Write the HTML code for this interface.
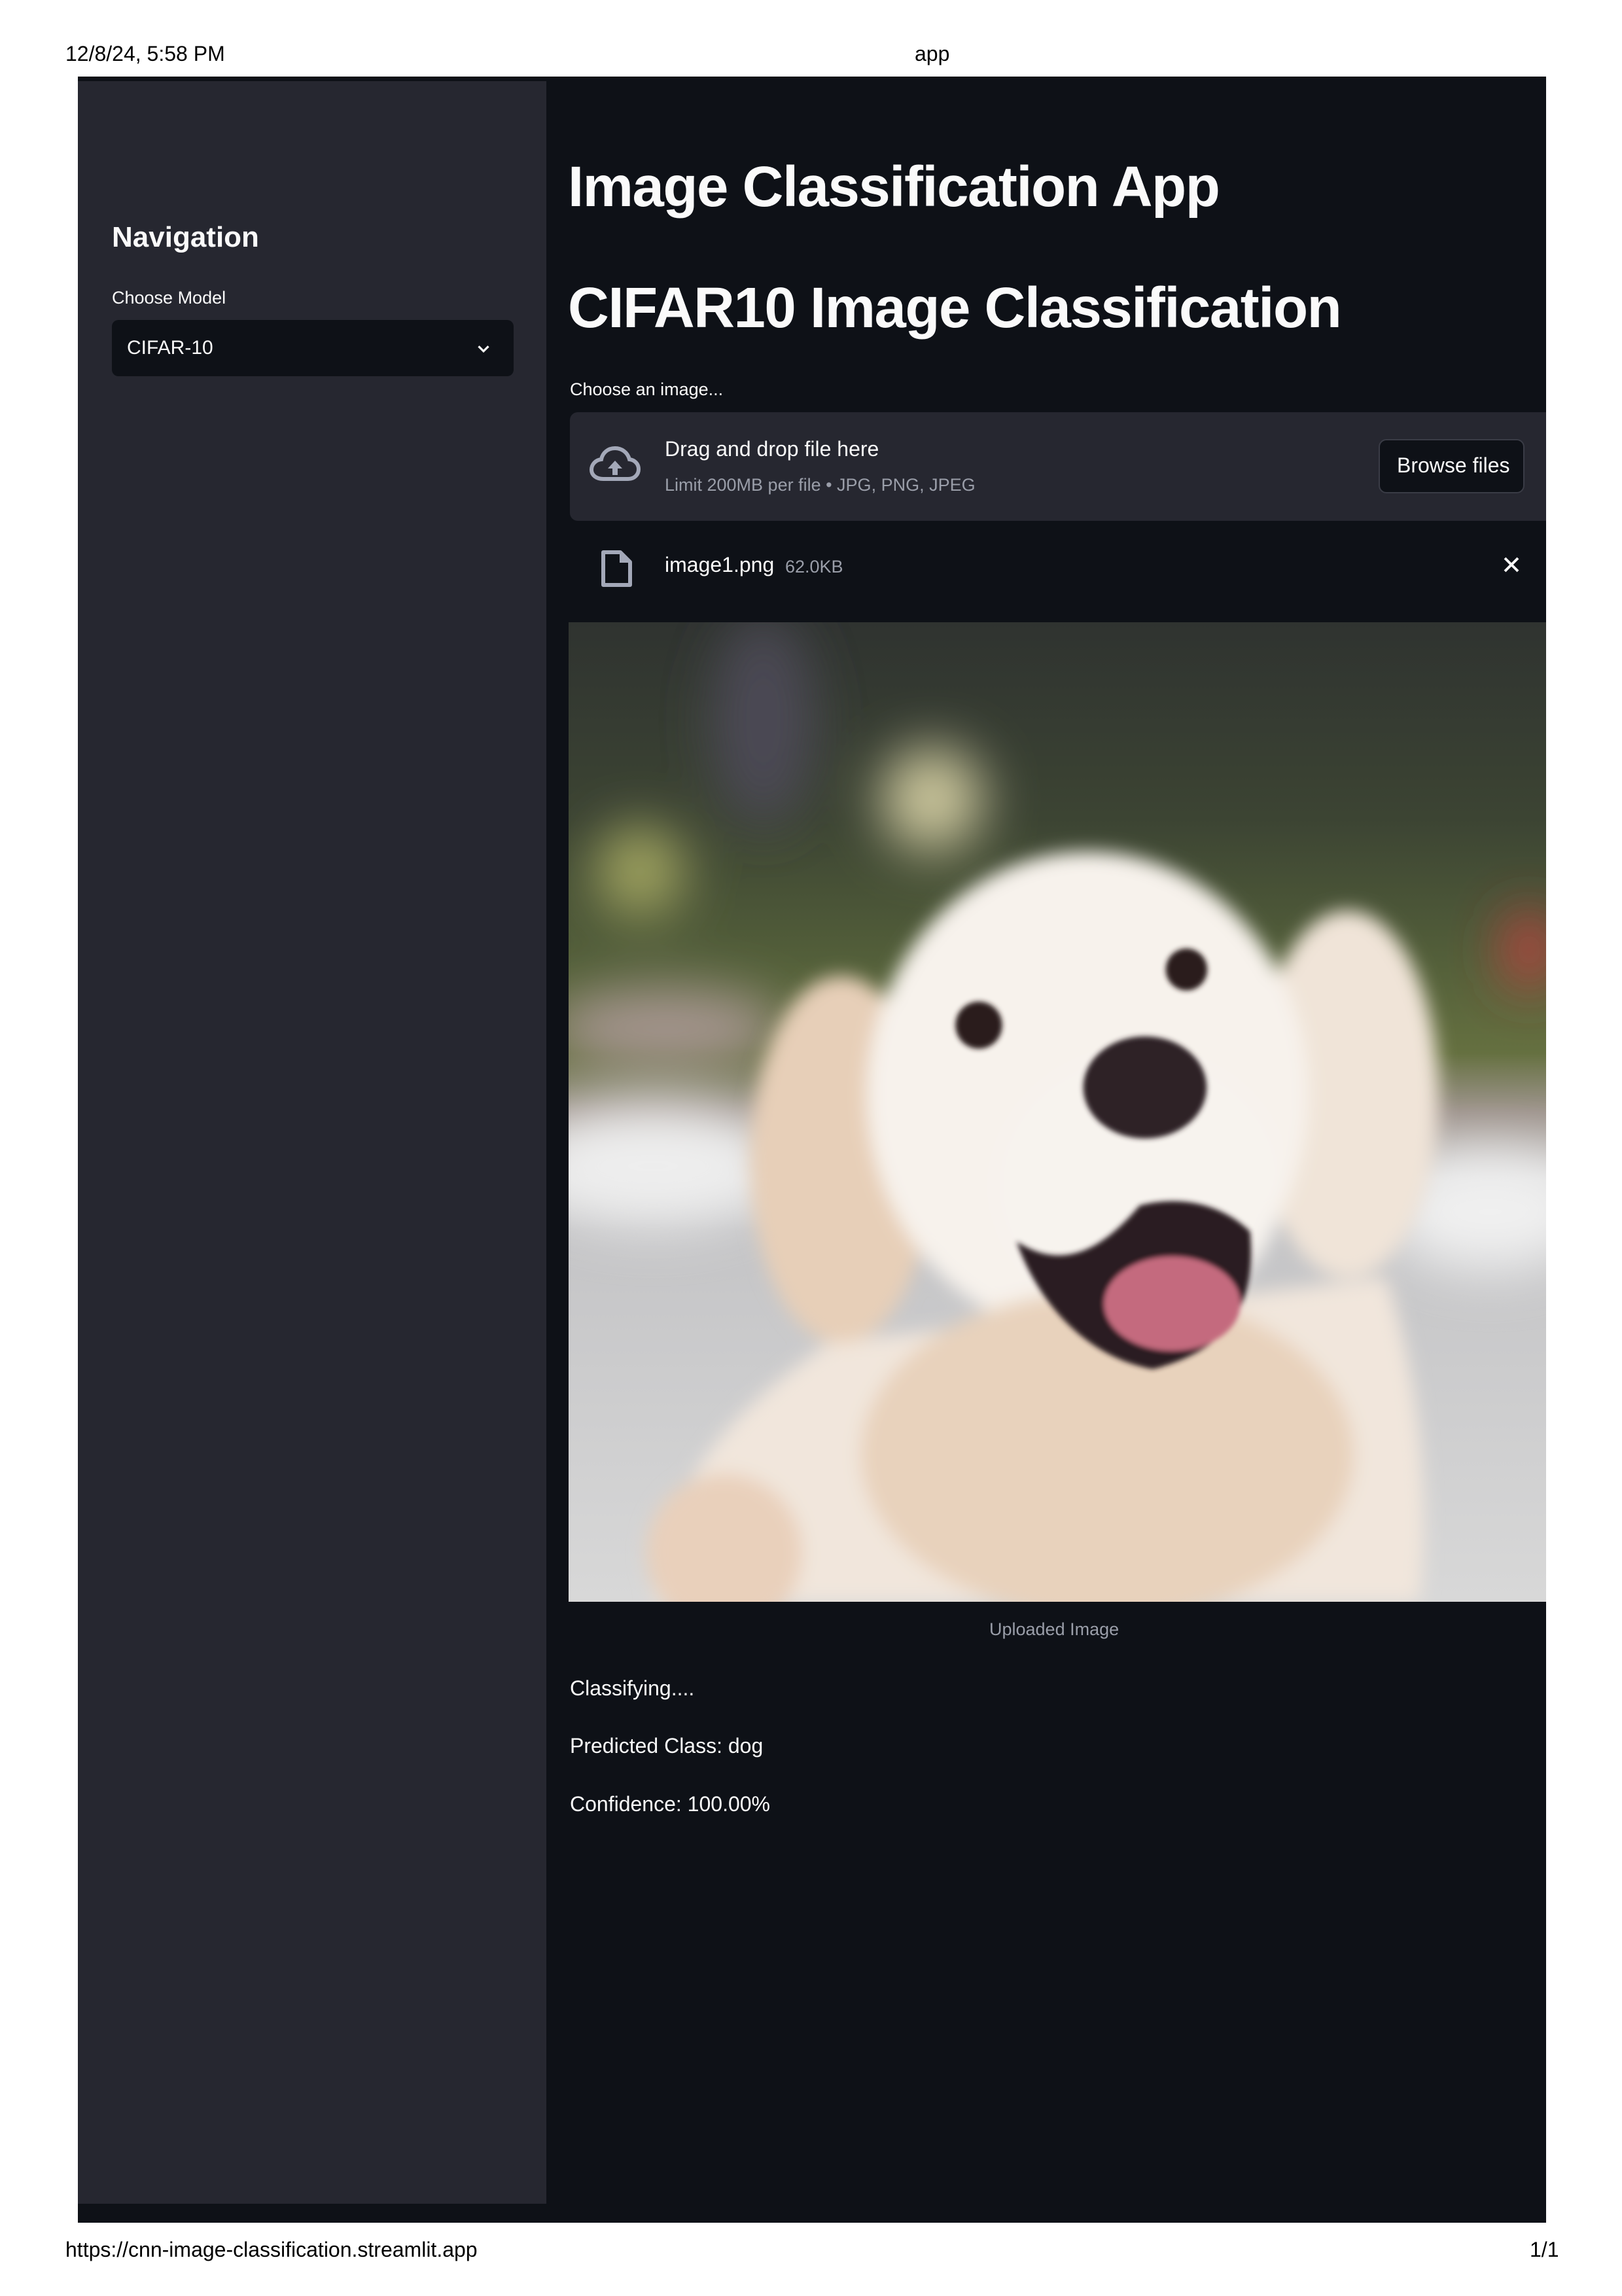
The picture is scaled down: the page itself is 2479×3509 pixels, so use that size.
<!DOCTYPE html>
<html><head><meta charset="utf-8"><style>
*{margin:0;padding:0;box-sizing:border-box}
body{width:2479px;height:3509px;background:#fff;position:relative;overflow:hidden;font-family:"Liberation Sans",sans-serif}
.a{position:absolute;white-space:nowrap}
.ph{font-family:"Liberation Sans",sans-serif;color:#000;font-size:32px}
.t{color:#fafafa}
</style></head><body>
<div class="a ph" style="left:100px;top:64px">12/8/24, 5:58 PM</div>
<div class="a ph" style="left:1398px;top:64px">app</div>
<div class="a" style="left:119px;top:117px;width:2244px;height:3280px;background:#0e1117"></div>
<div class="a" style="left:119px;top:124px;width:716px;height:3244px;background:#262730"></div>
<div class="a t" style="left:171px;top:338px;font-size:44px;font-weight:600">Navigation</div>
<div class="a t" style="left:171px;top:440px;font-size:27px">Choose Model</div>
<div class="a" style="left:171px;top:489px;width:614px;height:86px;background:#0e1117;border-radius:10px"></div>
<div class="a t" style="left:194px;top:515px;font-size:30px">CIFAR-10</div>
<svg class="a" style="left:724px;top:518px" width="30" height="30" viewBox="0 0 24 24"><path d="M6 9l6 6 6-6" fill="none" stroke="#fafafa" stroke-width="2.6"/></svg>

<div class="a t" style="left:868px;top:236px;font-size:87px;font-weight:700;letter-spacing:-1.5px">Image Classification App</div>
<div class="a t" style="left:868px;top:421px;font-size:87px;font-weight:700;letter-spacing:-1.5px">CIFAR10 Image Classification</div>
<div class="a t" style="left:871px;top:580px;font-size:27px">Choose an image...</div>

<div class="a" style="left:871px;top:630px;width:1492px;height:166px;background:#262730;border-radius:12px 0 0 12px"></div>
<svg class="a" style="left:900px;top:680px" width="80" height="60" viewBox="0 0 80 60"><path d="M22 52 H60 C70 52 76 45 76 37 C76 29 70 23 62 22 C59 11 50 5 40 5 C29 5 21 12 19 22 C10 23 4 30 4 38 C4 46 11 52 22 52Z" fill="none" stroke="#a3a8b8" stroke-width="6"/><path d="M40 24 L51 36 H44 V46 H36 V36 H29Z" fill="#a3a8b8"/></svg>
<div class="a t" style="left:1016px;top:668px;font-size:32px">Drag and drop file here</div>
<div class="a" style="left:1016px;top:726px;font-size:27px;color:#9a9ea9">Limit 200MB per file • JPG, PNG, JPEG</div>
<div class="a" style="left:2107px;top:671px;width:223px;height:83px;background:#0e1117;border:2px solid #3a3c46;border-radius:12px"></div>
<div class="a t" style="left:2135px;top:693px;font-size:32px">Browse files</div>

<svg class="a" style="left:918px;top:840px" width="50" height="58" viewBox="0 0 50 58"><path d="M4 4 H30 L45 19 V54 H4Z" fill="none" stroke="#a3a8b8" stroke-width="6" stroke-linejoin="round"/><path d="M29 4 V20 H45" fill="#a3a8b8"/></svg>
<div class="a t" style="left:1016px;top:845px;font-size:32px">image1.png</div>
<div class="a" style="left:1200px;top:851px;font-size:27px;color:#9a9ea9">62.0KB</div>
<svg class="a" style="left:2296px;top:849px" width="28" height="28" viewBox="0 0 28 28"><path d="M4 4 L24 24 M24 4 L4 24" stroke="#fafafa" stroke-width="4"/></svg>

<svg class="a" style="left:869px;top:951px" width="1494" height="1497" viewBox="0 0 1506 1495" preserveAspectRatio="none">
<defs>
<linearGradient id="bg" x1="0" y1="0" x2="0" y2="1"><stop offset="0" stop-color="#2f3330"/><stop offset="0.2" stop-color="#3c4433"/><stop offset="0.35" stop-color="#54603a"/><stop offset="0.44" stop-color="#657040"/><stop offset="0.5" stop-color="#a0968f"/><stop offset="0.57" stop-color="#d3d3d4"/><stop offset="0.62" stop-color="#c4c4c6"/><stop offset="1" stop-color="#d8d8d8"/></linearGradient>
<filter id="b"><feGaussianBlur stdDeviation="40"/></filter>
<filter id="s"><feGaussianBlur stdDeviation="14"/></filter>
<filter id="f"><feGaussianBlur stdDeviation="4"/></filter>
</defs>
<rect width="1506" height="1495" fill="url(#bg)"/>
<g filter="url(#b)"><circle cx="560" cy="270" r="80" fill="#c8c39a"/><circle cx="110" cy="380" r="70" fill="#9ea15f"/><ellipse cx="130" cy="830" rx="200" ry="90" fill="#eeeeee"/><ellipse cx="1420" cy="900" rx="160" ry="90" fill="#f0f0f0"/><ellipse cx="1480" cy="500" rx="40" ry="60" fill="#c04040"/><ellipse cx="150" cy="620" rx="180" ry="60" fill="#a69590"/><ellipse cx="300" cy="150" rx="80" ry="160" fill="#4b4a55"/></g>
<g filter="url(#s)">
<path d="M130 1495 C150 1300 260 1200 400 1100 L1260 1000 C1310 1150 1330 1350 1310 1495Z" fill="#f1e6dc"/>
<ellipse cx="240" cy="1420" rx="120" ry="120" fill="#e9d0bb"/>
<ellipse cx="420" cy="820" rx="140" ry="280" fill="#e7cfb8"/>
<ellipse cx="1200" cy="720" rx="140" ry="280" fill="#f0e4d8"/>
<ellipse cx="800" cy="720" rx="340" ry="370" fill="#f7f2ec"/>
<ellipse cx="830" cy="1270" rx="380" ry="250" fill="#e8d2bc"/>
<ellipse cx="880" cy="860" rx="220" ry="200" fill="#f7f3ee"/>
</g>
<g filter="url(#f)">
<ellipse cx="888" cy="710" rx="95" ry="78" fill="#2f2428"/>
<circle cx="632" cy="615" r="36" fill="#2a1f1c"/>
<circle cx="952" cy="530" r="32" fill="#2a1f1c"/>
<path d="M690 945 C760 990 820 960 880 890 C960 870 1020 900 1050 930 C1060 1040 1020 1110 900 1140 C790 1120 720 1030 690 945Z" fill="#2a1e20"/>
<ellipse cx="930" cy="1040" rx="105" ry="72" fill="#c46a7e"/>
</g>
</svg>
<div class="a" style="left:1512px;top:2475px;font-size:27px;color:#9a9ea9">Uploaded Image</div>
<div class="a t" style="left:871px;top:2562px;font-size:32px">Classifying....</div>
<div class="a t" style="left:871px;top:2650px;font-size:32px">Predicted Class: dog</div>
<div class="a t" style="left:871px;top:2739px;font-size:32px">Confidence: 100.00%</div>
<div class="a ph" style="left:100px;top:3420px">https://cnn-image-classification.streamlit.app</div>
<div class="a ph" style="left:2338px;top:3420px">1/1</div>
</body></html>
